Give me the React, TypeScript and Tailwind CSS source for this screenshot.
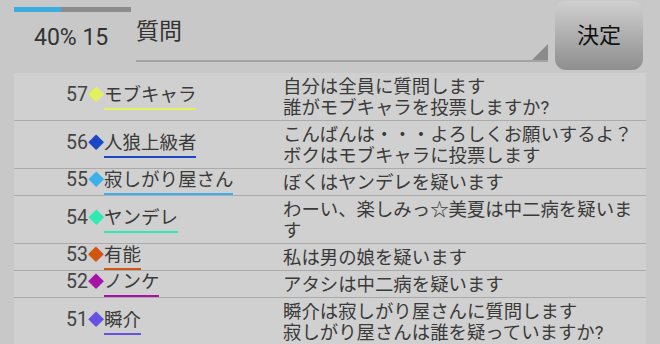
import React from 'react'

const rows = [
  { no: 57, name: 'モブキャラ', color: '#e2f25c', lines: ['自分は全員に質問します', '誰がモブキャラを投票しますか?'] },
  { no: 56, name: '人狼上級者', color: '#1b46c6', lines: ['こんばんは・・・よろしくお願いするよ？', 'ボクはモブキャラに投票します'] },
  { no: 55, name: '寂しがり屋さん', color: '#3db0ea', lines: ['ぼくはヤンデレを疑います'] },
  { no: 54, name: 'ヤンデレ', color: '#2fe8b2', lines: ['わーい、楽しみっ☆美夏は中二病を疑います'] },
  { no: 53, name: '有能', color: '#d0550f', lines: ['私は男の娘を疑います'] },
  { no: 52, name: 'ノンケ', color: '#a512a5', lines: ['アタシは中二病を疑います'] },
  { no: 51, name: '瞬介', color: '#6552e2', lines: ['瞬介は寂しがり屋さんに質問します', '寂しがり屋さんは誰を疑っていますか?'] },
]

export default function App() {
  return (
    <div className="w-[660px] h-[344px] overflow-hidden bg-[#c8c8c8] text-[#3a3a3a] font-['Roboto','Noto_Sans_CJK_JP',sans-serif]">
      {/* header */}
      <div className="flex h-[73px]">
        <div className="w-[136px] shrink-0 pl-[14px] pt-[7px]">
          <div className="flex w-[117px] h-[5px] bg-[#8c8c8c]">
            <div className="w-[47px] h-full bg-[#3aafdf]" />
          </div>
          <div className="pl-[20px] mt-[12px] text-[23px] leading-[28px] text-[#333]">40% 15</div>
        </div>
        <div className="relative w-[412px] h-[62px] border-b-2 border-[#a2a2a2]">
          <div className="pt-[18px] text-[23px] leading-[28px] text-[#333]">質問</div>
          <div className="absolute right-0 bottom-0 w-0 h-0 border-l-[16px] border-l-transparent border-b-[16px] border-b-[#8a8a8a]" />
        </div>
        <button className="ml-[7px] mt-[1px] w-[88px] h-[69px] rounded-[11px] bg-linear-to-b from-[#d0d0d0] to-[#8e8e8e] text-[22px] text-[#111]">
          決定
        </button>
      </div>

      {/* list */}
      <div className="mx-[14px] bg-[#d0d0d0]">
        {rows.map(r => (
          <div key={r.no} className="flex items-center border-b border-[#aaaaaa]">
            <div className="w-[269px] shrink-0 pl-[52px] flex items-end">
              <span className="text-[19.5px] leading-[22px] pb-[2px] border-b-2 border-transparent text-[#444]">{r.no}</span>
              <span className="text-[16px] leading-[22px] pb-[2px] border-b-2 border-transparent" style={{ color: r.color }}>◆</span>
              <span className="text-[18.5px] leading-[22px] pb-[2px] border-b-2" style={{ borderColor: r.color }}>{r.name}</span>
            </div>
            <div className="flex-1 py-[2.5px] pr-[10px] text-[18.4px] leading-[21px]">
              {r.lines.map((l, i) => <div key={i}>{l}</div>)}
            </div>
          </div>
        ))}
      </div>
    </div>
  )
}
